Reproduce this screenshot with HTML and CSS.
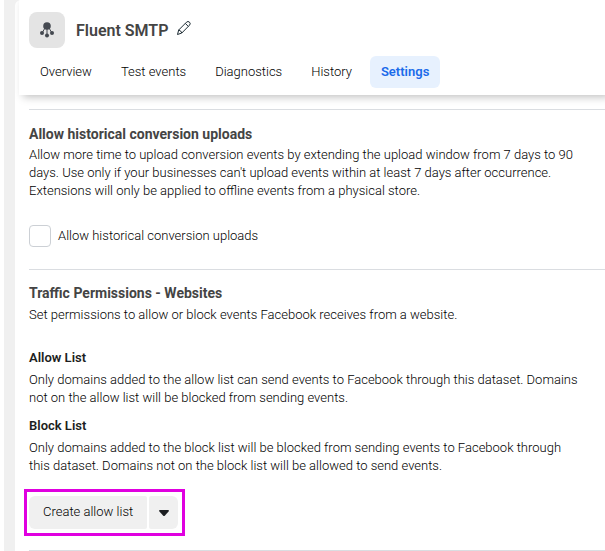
FILE: index.html
```html
<!DOCTYPE html>
<html lang="en">
<head>
    <meta charset="UTF-8">
    <meta name="viewport" content="width=device-width, initial-scale=1.0">
    <title>Fluent SMTP - Settings</title>
    <link rel="stylesheet" href="styles.css">
</head>
<body>
    <div class="page">
        <div class="panel">
            <header class="header">
                <div class="title-row">
                    <div class="source-icon">
                        <svg width="16" height="16" viewBox="0 0 16 16" fill="#444950" stroke="#444950">
                            <path d="M8 5v8M6 6L3 11M10 6l3 5" fill="none"/>
                            <circle cx="8" cy="4" r="3.8" stroke="none"/>
                            <circle cx="3" cy="11" r="2" stroke="none"/>
                            <circle cx="8" cy="13.500" r="2" stroke="none"/>
                            <circle cx="13" cy="11" r="2" stroke="none"/>
                        </svg>
                    </div>
                    <h1>Fluent SMTP</h1>
                    <button class="edit" type="button" aria-label="Edit name">
                        <svg width="16" height="16" viewBox="0 0 16 16" fill="none" stroke="#1c2b33" stroke-linejoin="round">
                            <path d="M1.500 14.500l1.200-4.500 7.800-7.800q1.500-1.500 3 0t0 3L5.800 13z"/>
                            <path d="M9.300 3.400l3 3M2.700 10q2.400.6 3.100 3"/>
                        </svg>
                    </button>
                </div>
                <nav class="tabs">
                    <a href="#">Overview</a>
                    <a href="#">Test events</a>
                    <a href="#">Diagnostics</a>
                    <a href="#">History</a>
                    <a href="#" class="active">Settings</a>
                </nav>
            </header>
            <main class="content">
                <section class="uploads">
                    <h2>Allow historical conversion uploads</h2>
                    <p>Allow more time to upload conversion events by extending the upload window from 7 days to 90 days. Use only if your businesses can't upload events within at least 7 days after occurrence. Extensions will only be applied to offline events from a physical store.</p>
                    <div class="check-row">
                        <input type="checkbox" id="historicalUploads">
                        <label for="historicalUploads">Allow historical conversion uploads</label>
                    </div>
                </section>
                <section class="permissions">
                    <h2>Traffic Permissions - Websites</h2>
                    <p>Set permissions to allow or block events Facebook receives from a website.</p>
                    <div class="lists">
                        <h3>Allow List</h3>
                        <p>Only domains added to the allow list can send events to Facebook through this dataset. Domains not on the allow list will be blocked from sending events.</p>
                        <h3>Block List</h3>
                        <p>Only domains added to the block list will be blocked from sending events to Facebook through this dataset. Domains not on the block list will be allowed to send events.</p>
                    </div>
                    <div class="highlight">
                        <button class="create" type="button">Create allow list</button>
                        <button class="more" type="button" aria-label="More options">
                            <svg width="10" height="6" viewBox="0 0 10 6" fill="#1c1e21">
                                <path d="M1 0h8q1 0 1 1L6 5.500q-1 1-2 0L0 1q0-1 1-1z"/>
                            </svg>
                        </button>
                    </div>
                </section>
                <hr>
            </main>
        </div>
    </div>
</body>
</html>
```
FILE: styles.css
```css
* {
    box-sizing: border-box;
}
body {
    margin: 0;
    background-color: #f0f0f0;
    font-family: Roboto, Arial, sans-serif;
    font-size: 13px;
    font-weight: 300;
    line-height: 18px;
    color: #000;
}
h1, h2, h3, p {
    margin: 0;
}
button {
    font: inherit;
    color: inherit;
    border: none;
    cursor: pointer;
}
.page {
    min-height: 100vh;
    padding-left: 11px;
    border-left: 4px solid white;
}
.panel {
    min-height: 100vh;
    background-color: white;
    border-radius: 6px 0 0 0;
    overflow: hidden;
}
.header {
    position: relative;
    margin-left: 4px;
    padding: 12px 10px 7px;
    background-color: white;
    box-shadow: 4px 2px 8px rgba(0,0,0,0.25);
}
.title-row {
    display: flex;
    align-items: center;
    height: 36px;
}
.source-icon {
    display: flex;
    align-items: center;
    justify-content: center;
    width: 36px;
    height: 36px;
    border-radius: 8px;
    background-color: #e4e4e4;
}
h1 {
    margin-left: 11px;
    padding-top: 2px;
    font-size: 16px;
    font-weight: 600;
    line-height: 20px;
    color: #444;
}
.edit {
    display: flex;
    margin: 0 0 4px 8px;
    padding: 0;
    background: none;
}
.tabs {
    display: flex;
    gap: 7px;
    margin-top: 8px;
}
.tabs a {
    padding: 7px 11px;
    border-radius: 6px;
    color: #000;
    text-decoration: none;
}
.tabs .active {
    background-color: #e7f1fe;
    color: #1a6bea;
    font-weight: 600;
}
.content {
    padding: 14px 0 0 14px;
}
section {
    border-top: 1px solid #dadde1;
    padding-top: 15px;
}
section p {
    padding-right: 24px;
}
h2 {
    font-size: 14px;
    font-weight: 700;
    color: #444;
}
.uploads {
    padding-bottom: 22px;
}
.uploads h2 {
    margin-bottom: 3px;
}
.check-row {
    display: flex;
    align-items: center;
    gap: 7px;
    margin-top: 25px;
}
.check-row input {
    appearance: none;
    width: 22px;
    height: 22px;
    margin: 0;
    border: 1px solid #ccd0d5;
    border-radius: 4px;
    background-color: white;
}
.permissions {
    padding-top: 14px;
}
.permissions h2 {
    margin-bottom: 4px;
}
.lists {
    margin-top: 25px;
}
h3 {
    margin-bottom: 4px;
    font-size: 13px;
    font-weight: 600;
    color: #1c1e21;
}
.lists p {
    margin-bottom: 10px;
}
.highlight {
    display: flex;
    gap: 2px;
    width: fit-content;
    margin: 14px 0 14px -5px;
    padding: 4px 4px 4px 2px;
    border: 3px solid #e000e0;
}
.create {
    padding: 7px 14px 8px;
    border-radius: 6px 2px 2px 6px;
    background-color: #f0f0f0;
}
.more {
    display: flex;
    align-items: center;
    justify-content: center;
    width: 29px;
    padding: 0;
    border-radius: 2px 6px 6px 2px;
    background-color: #f0f0f0;
}
hr {
    margin: 0;
    border: none;
    border-top: 1px solid #dadde1;
}
```
